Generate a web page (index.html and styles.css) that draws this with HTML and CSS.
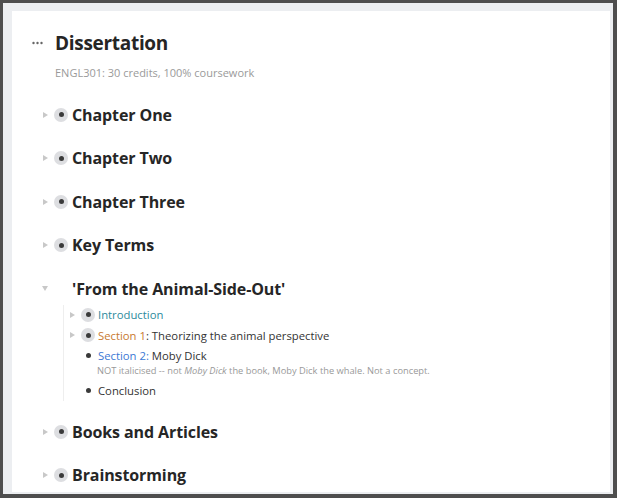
FILE: index.html
```html
<!DOCTYPE html>
<html>
<head>
<meta charset="utf-8">
<link rel="stylesheet" href="styles.css">
</head>
<body>
<div class="frame">
  <div class="page">
    <div class="header">
      <span class="dots"><svg width="11" height="4" viewBox="0 0 11 4"><circle cx="1.5" cy="2" r="1.2"/><circle cx="5.5" cy="2" r="1.2"/><circle cx="9.5" cy="2" r="1.2"/></svg></span>
      <h1 class="title">Dissertation</h1>
    </div>
    <div class="subtitle">ENGL301: 30 credits, 100% coursework</div>
    <div class="outline">
      <div class="row">
        <span class="arrow"><svg width="5" height="6" viewBox="0 0 5 6"><path d="M0 0L5 3L0 6Z"/></svg></span>
        <span class="bullet collapsed"><i></i></span>
        <span class="text">Chapter One</span>
      </div>
      <div class="row">
        <span class="arrow"><svg width="5" height="6" viewBox="0 0 5 6"><path d="M0 0L5 3L0 6Z"/></svg></span>
        <span class="bullet collapsed"><i></i></span>
        <span class="text">Chapter Two</span>
      </div>
      <div class="row">
        <span class="arrow"><svg width="5" height="6" viewBox="0 0 5 6"><path d="M0 0L5 3L0 6Z"/></svg></span>
        <span class="bullet collapsed"><i></i></span>
        <span class="text">Chapter Three</span>
      </div>
      <div class="row">
        <span class="arrow"><svg width="5" height="6" viewBox="0 0 5 6"><path d="M0 0L5 3L0 6Z"/></svg></span>
        <span class="bullet collapsed"><i></i></span>
        <span class="text">Key Terms</span>
      </div>
      <div class="row">
        <span class="arrow"><svg width="6" height="5" viewBox="0 0 6 5"><path d="M0 0L6 0L3 5Z"/></svg></span>
        <span class="bullet"></span>
        <span class="text">'From the Animal-Side-Out'</span>
      </div>
      <div class="children">
        <div class="crow">
          <span class="arrow"><svg width="5" height="6" viewBox="0 0 5 6"><path d="M0 0L5 3L0 6Z"/></svg></span>
          <span class="bullet collapsed"><i></i></span>
          <span class="ctext teal">Introduction</span>
        </div>
        <div class="crow">
          <span class="arrow"><svg width="5" height="6" viewBox="0 0 5 6"><path d="M0 0L5 3L0 6Z"/></svg></span>
          <span class="bullet collapsed"><i></i></span>
          <span class="ctext"><span class="orange">Section 1</span>: Theorizing the animal perspective</span>
        </div>
        <div class="crow">
          <span class="arrow"></span>
          <span class="bullet"><i></i></span>
          <span class="ctext"><span class="blue">Section 2:</span> Moby Dick</span>
        </div>
        <div class="note">NOT italicised -- not <em>Moby Dick</em> the book, Moby Dick the whale. Not a concept.</div>
        <div class="crow">
          <span class="arrow"></span>
          <span class="bullet"><i></i></span>
          <span class="ctext">Conclusion</span>
        </div>
      </div>
      <div class="row">
        <span class="arrow"><svg width="5" height="6" viewBox="0 0 5 6"><path d="M0 0L5 3L0 6Z"/></svg></span>
        <span class="bullet collapsed"><i></i></span>
        <span class="text">Books and Articles</span>
      </div>
      <div class="row">
        <span class="arrow"><svg width="5" height="6" viewBox="0 0 5 6"><path d="M0 0L5 3L0 6Z"/></svg></span>
        <span class="bullet collapsed"><i></i></span>
        <span class="text">Brainstorming</span>
      </div>
    </div>
  </div>
</div>
</body>
</html>
```

FILE: styles.css
```css
* { box-sizing: border-box; }
html, body { margin: 0; padding: 0; }
body {
  width: 617px;
  height: 498px;
  overflow: hidden;
  font-family: "Open Sans", "Noto Sans", sans-serif;
  color: #2a2a2a;
}
.frame {
  width: 617px;
  height: 498px;
  border: 3px solid #4e4e4e;
  border-right-width: 4px;
  border-bottom-width: 4px;
  background: #eceef1;
  padding: 8px 3px 2px 9px;
}
.page {
  background: #fff;
  height: 100%;
  padding: 20px 0 0 20px;
  overflow: hidden;
}
.header {
  display: flex;
  align-items: center;
  height: 24px;
}
.dots {
  width: 23px;
  display: flex;
  align-items: center;
  fill: #666;
}
.title {
  margin: 0;
  font-size: 19px;
  font-weight: 700;
  color: #252525;
  letter-spacing: -0.3px;
}
.subtitle {
  margin: 9px 0 0 23px;
  font-size: 11px;
  color: #9a9a9a;
  line-height: 18px;
}
.outline {
  margin-top: 11px;
  padding-left: 6px;
}
.row {
  display: flex;
  align-items: center;
  height: 43.5px;
}
.arrow {
  width: 14px;
  display: flex;
  justify-content: center;
  align-items: center;
  fill: #c8c8c8;
}
.bullet {
  width: 18px;
  height: 18px;
  display: flex;
  justify-content: center;
  align-items: center;
  position: relative;
}
.bullet i {
  width: 5px;
  height: 5px;
  border-radius: 50%;
  background: #3a3a3a;
  display: block;
}
.bullet.collapsed::before {
  content: "";
  position: absolute;
  left: 2px;
  top: 2px;
  width: 14px;
  height: 14px;
  border-radius: 50%;
  background: #dddee1;
}
.bullet.collapsed i { position: relative; }
.text {
  margin-left: 2px;
  font-size: 16px;
  font-weight: 700;
  color: #262626;
  letter-spacing: -0.1px;
}
.children {
  margin-left: 25px;
  margin-top: -6px;
  margin-bottom: 9px;
  border-left: 1px solid #eeeeee;
  padding: 0 0 0 1px;
}
.crow {
  display: flex;
  align-items: center;
  height: 20.5px;
}
.ctext {
  margin-left: 1px;
  font-size: 11.3px;
  color: #333;
}
.teal { color: #2c8a9c; }
.orange { color: #c8792f; }
.blue { color: #3b78d4; }
.note {
  margin: -1.25px 0 3.75px 32px;
  font-size: 9.3px;
  color: #999;
  line-height: 12px;
}
.note em { font-style: italic; }
```
